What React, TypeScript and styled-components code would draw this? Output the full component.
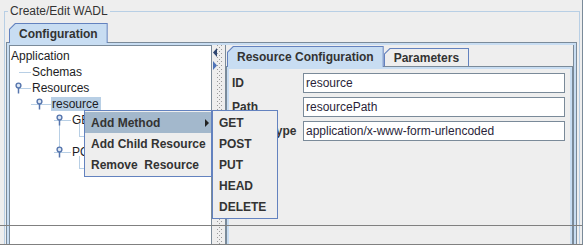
import * as React from 'react'
import styled, { createGlobalStyle } from 'styled-components'

const DARK = '#7a8a99'
const BLUE = '#6382bf'
const PALE = '#b8cfe5'
const TAB_FILL = '#c8ddf2'
const GRAY = '#eeeeee'

const GlobalStyle = createGlobalStyle`
  html, body {
    margin: 0;
    background: ${GRAY};
  }
  body {
    font-family: "Liberation Sans", Arial, sans-serif;
    font-size: 12px;
    color: #333333;
  }
`

const Window = styled.div`
  position: relative;
  width: 583px;
  height: 245px;
  box-sizing: border-box;
  overflow: hidden;
  padding: 4px 2px 0 4px;
  background: ${GRAY};
  border-right: 1px solid ${DARK};
  border-bottom: 1px solid #808080;
`

const Group = styled.fieldset`
  margin: 0;
  padding: 5px 2px 0 1px;
  min-width: 0;
  height: 260px;
  box-sizing: border-box;
  border: 1px solid ${PALE};
  border-bottom: none;
  display: flex;
  flex-direction: column;
`

const Title = styled.legend`
  margin-left: 2px;
  padding: 0 2px;
  font-size: 12px;
  line-height: 14px;
  color: #333333;
`

const TabStrip = styled.div<{ $inset: number }>`
  display: flex;
  align-items: flex-start;
  padding-left: ${p => p.$inset}px;
  position: relative;
  z-index: 1;
`

const Tab = styled.div<{ $active?: boolean; $height: number }>`
  height: ${p => p.$height}px;
  margin-top: ${p => (p.$active ? 0 : 2)}px;
  margin-bottom: ${p => (p.$active ? -1 : 0)}px;
  padding: 1px 1px 0 1px;
  box-sizing: border-box;
  background: ${BLUE};
  clip-path: polygon(6px 0, 100% 0, 100% 100%, 0 100%, 0 6px);
`

const TabFace = styled.div<{ $active?: boolean }>`
  height: 100%;
  box-sizing: border-box;
  padding: 0 9px;
  display: flex;
  align-items: center;
  background: ${p => (p.$active ? TAB_FILL : GRAY)};
  clip-path: polygon(5.6px 0, 100% 0, 100% 100%, 0 100%, 0 5.6px);
  font-weight: bold;
  color: #333333;
  white-space: nowrap;
`

const TabPanel = styled.div`
  flex: 1;
  display: flex;
  flex-direction: column;
  border: 1px solid ${DARK};
  padding: 2px;
  background: ${TAB_FILL};
  min-height: 0;
`

const SplitPane = styled.div`
  flex: 1;
  display: flex;
  background: ${GRAY};
  min-height: 0;
`

const TreeScroll = styled.div`
  width: 203px;
  flex: none;
  box-sizing: border-box;
  border: 1px solid ${DARK};
  border-bottom: none;
  background: #ffffff;
  padding-top: 2px;
`

const Row = styled.div`
  display: flex;
  align-items: flex-start;
  height: 16px;
`

const Guide = styled.svg`
  flex: none;
  display: block;
  overflow: visible;
`

const NodeLabel = styled.span<{ $selected?: boolean }>`
  margin-top: 1px;
  height: 14px;
  line-height: 14px;
  padding: 0 2px 0 1px;
  color: #1c1c24;
  white-space: nowrap;
  background: ${p => (p.$selected ? PALE : 'transparent')};
`

const Divider = styled.div`
  width: 13px;
  flex: none;
  box-sizing: border-box;
  display: flex;
  padding: 0 2px 0 1px;
`

const ArrowStack = styled.div`
  width: 4px;
  display: flex;
  flex-direction: column;
  gap: 4px;
  padding-top: 3px;
`

const Bumps = styled.div`
  flex: 1;
  background-image:
    radial-gradient(circle at 0.5px 0.5px, #9a9a9a 0.7px, transparent 0.8px),
    radial-gradient(circle at 2.5px 2.5px, #9a9a9a 0.7px, transparent 0.8px);
  background-size: 4px 4px;
`

const RightPane = styled.div`
  flex: 1;
  min-width: 0;
  display: flex;
  flex-direction: column;
  border-left: 1px solid ${DARK};
  border-right: 1px solid ${DARK};
  padding-top: 1px;
`

const InnerPanel = styled.div`
  flex: 1;
  border: 1px solid ${DARK};
  border-bottom: none;
  padding: 2px 2px 0 2px;
  background: ${TAB_FILL};
  display: flex;
`

const Form = styled.div`
  flex: 1;
  background: ${GRAY};
  display: grid;
  grid-template-columns: 71px 1fr;
  grid-auto-rows: 20px;
  row-gap: 4px;
  align-content: start;
  padding: 4px 5px 0 3px;
`

const FieldLabel = styled.label`
  display: flex;
  align-items: center;
  font-weight: bold;
  color: #333333;
  white-space: nowrap;
`

const Field = styled.input`
  box-sizing: border-box;
  height: 20px;
  width: 100%;
  margin: 0;
  padding: 0 2px;
  border: 1px solid ${DARK};
  background: #ffffff;
  font-family: "Liberation Sans", Arial, sans-serif;
  font-size: 12px;
  color: #2a1f3a;
  outline: none;
`

const Rule = styled.div`
  position: absolute;
  left: 0;
  right: 0;
  top: 225px;
  height: 1px;
  background: #808080;
`

const Menu = styled.div<{ $x: number; $y: number; $w: number }>`
  position: absolute;
  left: ${p => p.$x}px;
  top: ${p => p.$y}px;
  width: ${p => p.$w}px;
  box-sizing: border-box;
  padding: 1px 0;
  border: 1px solid ${BLUE};
  background: ${GRAY};
  z-index: 5;
`

const MenuItem = styled.div<{ $active?: boolean }>`
  height: 21px;
  display: flex;
  align-items: center;
  justify-content: space-between;
  padding: 0 2px 0 6px;
  font-weight: bold;
  color: #333333;
  white-space: pre;
  background: ${p => (p.$active ? '#a3b8cc' : 'transparent')};
`

const SubArrow = styled.span`
  width: 0;
  height: 0;
  border-left: 4px solid #222222;
  border-top: 4px solid transparent;
  border-bottom: 4px solid transparent;
`

const Leg = ({ x1, x2 }: { x1: number; x2: number }) => (
  <line x1={x1} x2={x2} y1={8.5} y2={8.5} stroke={PALE} />
)

const Rail = ({ x, y1, y2 }: { x: number; y1: number; y2: number }) => (
  <line x1={x + 0.5} x2={x + 0.5} y1={y1} y2={y2} stroke={PALE} />
)

const Handle = ({ x }: { x: number }) => (
  <g>
    <line x1={x + 0.5} x2={x + 0.5} y1={7} y2={13.5} stroke="#5675ad" strokeWidth={1.5} />
    <circle cx={x + 0.5} cy={5.5} r={2.4} fill="#dfe9f5" stroke="#5675ad" strokeWidth={1.4} />
  </g>
)

const indent = [0, 21, 41, 61, 81]

// child rows of GET / POST sit under the popup, only their legs peek out
const nodes = [
  { depth: 0, label: 'Application', guide: null },
  { depth: 1, label: 'Schemas', guide: <Leg x1={9} x2={21} /> },
  { depth: 1, label: 'Resources', guide: <><Leg x1={8} x2={21} /><Handle x={8} /></> },
  { depth: 2, label: 'resource', selected: true, guide: <><Leg x1={21} x2={41} /><Handle x={29} /></> },
  {
    depth: 3,
    label: 'GET',
    guide: <><Rail x={49} y1={8} y2={16} /><Leg x1={44} x2={61} /><Handle x={49} /><Rail x={69} y1={12} y2={16} /></>,
  },
  { depth: 4, label: '', guide: <><Rail x={49} y1={0} y2={16} /><Rail x={69} y1={0} y2={9} /><Leg x1={69} x2={80} /></> },
  {
    depth: 3,
    label: 'POST',
    guide: <><Rail x={49} y1={0} y2={6} /><Leg x1={44} x2={61} /><Handle x={49} /><Rail x={69} y1={12} y2={16} /></>,
  },
  { depth: 4, label: '', guide: <><Rail x={69} y1={0} y2={9} /><Leg x1={69} x2={80} /></> },
]

const fields = [
  { label: 'ID', value: 'resource' },
  { label: 'Path', value: 'resourcePath' },
  { label: 'Media Type', value: 'application/x-www-form-urlencoded' },
]

const menuItems = ['Add Method', 'Add Child Resource', 'Remove  Resource']
const methods = ['GET', 'POST', 'PUT', 'HEAD', 'DELETE']

export default function App() {
  return (
    <Window>
      <GlobalStyle />
      <Group>
        <Title>Create/Edit WADL</Title>
        <TabStrip $inset={3}>
          <Tab $active $height={20}>
            <TabFace $active>Configuration</TabFace>
          </Tab>
        </TabStrip>
        <TabPanel>
          <SplitPane>
            <TreeScroll>
              {nodes.map((node, i) => (
                <Row key={i}>
                  {node.depth > 0 && (
                    <Guide width={indent[node.depth]} height={16}>
                      {node.guide}
                    </Guide>
                  )}
                  {node.label && <NodeLabel $selected={node.selected}>{node.label}</NodeLabel>}
                </Row>
              ))}
            </TreeScroll>
            <Divider>
              <ArrowStack>
                <svg width={4} height={9}>
                  <polygon points="4,0 0,4.5 4,9" fill="#2f4670" />
                </svg>
                <svg width={4} height={9}>
                  <polygon points="0,0 4,4.5 0,9" fill="#4f74b8" />
                </svg>
              </ArrowStack>
              <Bumps />
            </Divider>
            <RightPane>
              <TabStrip $inset={1}>
                <Tab $active $height={21}>
                  <TabFace $active>Resource Configuration</TabFace>
                </Tab>
                <Tab $height={18}>
                  <TabFace>Parameters</TabFace>
                </Tab>
              </TabStrip>
              <InnerPanel>
                <Form>
                  {fields.map(f => (
                    <React.Fragment key={f.label}>
                      <FieldLabel>{f.label}</FieldLabel>
                      <Field readOnly value={f.value} />
                    </React.Fragment>
                  ))}
                </Form>
              </InnerPanel>
            </RightPane>
          </SplitPane>
        </TabPanel>
      </Group>
      <Rule />
      <Menu $x={84} $y={110} $w={128}>
        {menuItems.map((item, i) => (
          <MenuItem key={item} $active={i === 0}>
            {item}
            {i === 0 && <SubArrow />}
          </MenuItem>
        ))}
      </Menu>
      <Menu $x={212} $y={110} $w={66}>
        {methods.map(m => (
          <MenuItem key={m}>{m}</MenuItem>
        ))}
      </Menu>
    </Window>
  )
}
